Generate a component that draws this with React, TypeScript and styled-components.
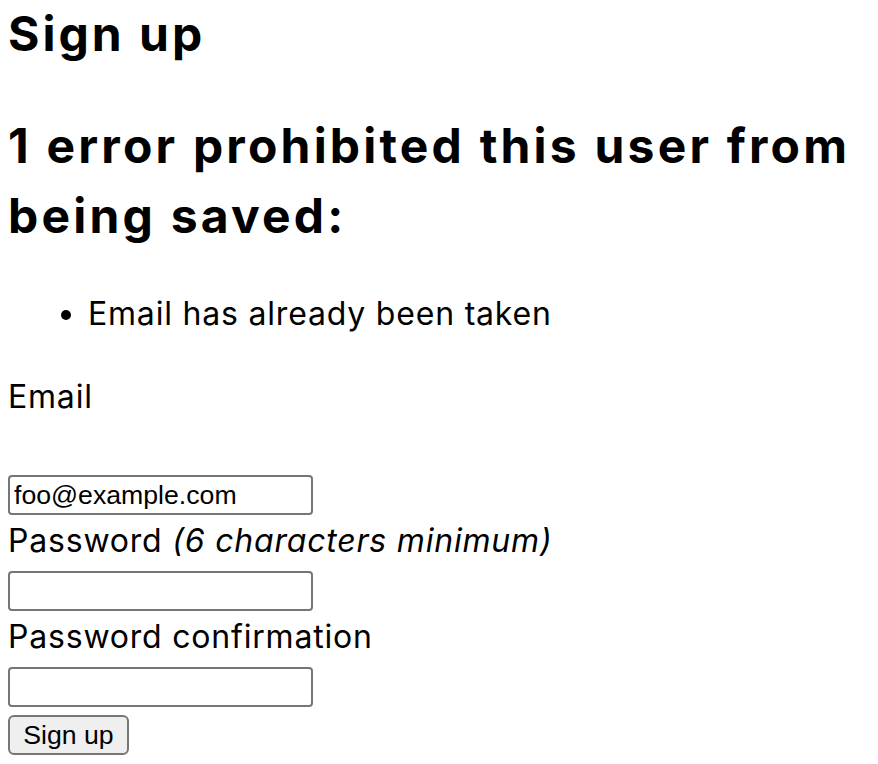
import * as React from 'react';
import styled, { createGlobalStyle } from 'styled-components';

const GlobalStyle = createGlobalStyle`
  html, body {
    margin: 0;
    padding: 0;
    background: #ffffff;
  }
  body {
    font-family: Inter, "Noto Sans CJK JP", sans-serif;
    color: #000000;
  }
`;

export default function App() {
  return (
    <Page>
      <GlobalStyle />
      <Title>Sign up</Title>

      <ErrorBox>
        <ErrorTitle>1 error prohibited this user from being saved:</ErrorTitle>
        <ErrorList>
          <li>Email has already been taken</li>
        </ErrorList>
      </ErrorBox>

      <Form onSubmit={e => e.preventDefault()}>
        <Field>
          <Label htmlFor="user_email">Email</Label>
          <TextInput id="user_email" type="email" defaultValue="foo@example.com" gap={54} />
        </Field>

        <Field>
          <Label htmlFor="user_password">
            Password <Hint>(6 characters minimum)</Hint>
          </Label>
          <TextInput id="user_password" type="password" gap={6} />
        </Field>

        <Field>
          <Label htmlFor="user_password_confirmation">Password confirmation</Label>
          <TextInput id="user_password_confirmation" type="password" gap={6} />
        </Field>

        <Actions>
          <SubmitButton type="submit">Sign up</SubmitButton>
        </Actions>
      </Form>
    </Page>
  );
}

const Page = styled.div`
  padding: 0 8px;
`;

const Title = styled.h2`
  margin: 0;
  font-size: 48px;
  line-height: 68px;
  font-weight: 700;
  letter-spacing: 3px;
`;

const ErrorBox = styled.div`
  margin-top: 43px;
`;

const ErrorTitle = styled.h2`
  margin: 0;
  font-size: 48px;
  line-height: 70px;
  font-weight: 700;
  letter-spacing: 3.2px;
`;

const ErrorList = styled.ul`
  margin: 39px 0 33px;
  padding-left: 80px;
  font-size: 32px;
  line-height: 48px;
  letter-spacing: 0.8px;
`;

const Form = styled.form`
  display: flex;
  flex-direction: column;
  align-items: flex-start;
`;

const Field = styled.div`
  display: flex;
  flex-direction: column;
  align-items: flex-start;
`;

const Label = styled.label`
  padding-top: 2px;
  font-size: 32px;
  line-height: 48px;
  letter-spacing: 0.8px;
`;

const Hint = styled.em`
  font-style: italic;
`;

const TextInput = styled.input<{ gap: number }>`
  box-sizing: border-box;
  margin: ${p => p.gap}px 0 0;
  width: 305px;
  height: 40px;
  padding: 2px 4px;
  border: 2px solid #767676;
  border-radius: 4px;
  background: #ffffff;
  font-family: "Liberation Sans", Arial, sans-serif;
  font-size: 26.67px;
  color: #000000;
  outline: none;
`;

const Actions = styled.div`
  margin-top: 8px;
`;

const SubmitButton = styled.button`
  box-sizing: border-box;
  height: 40px;
  width: 121px;
  padding: 2px 12px;
  border: 2px solid #767676;
  border-radius: 6px;
  background: #efefef;
  font-family: "Liberation Sans", Arial, sans-serif;
  font-size: 26.67px;
  color: #000000;
`;
